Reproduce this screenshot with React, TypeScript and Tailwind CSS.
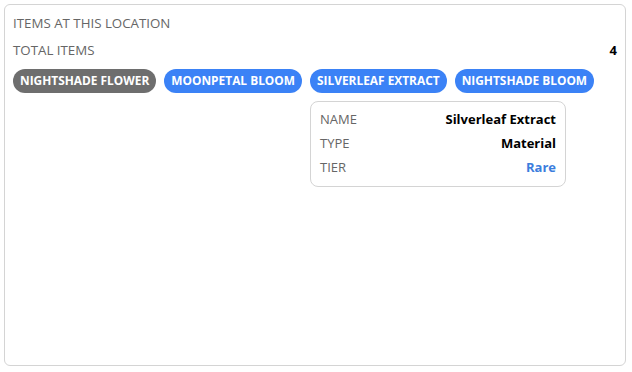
import React from "react";

const chips = [
  { label: "NIGHTSHADE FLOWER", active: false, grey: true },
  { label: "MOONPETAL BLOOM", active: false, grey: false },
  { label: "SILVERLEAF EXTRACT", active: true, grey: false },
  { label: "NIGHTSHADE BLOOM", active: false, grey: false },
];

export default function App() {
  return (
    <div className="w-[632px] h-[372px] bg-white p-1" style={{ fontFamily: '"Open Sans", "Noto Sans", sans-serif' }}>
      <div className="h-[362px] w-[622px] rounded-md border border-[#d4d4d4] px-2 pt-2">
        <div className="h-5 leading-5 text-[13.3px] text-[#666666]">ITEMS AT THIS LOCATION</div>
        <div className="mt-[7px] flex h-5 items-center justify-between text-[13.3px] leading-5">
          <span className="text-[#666666]">TOTAL ITEMS</span>
          <span className="font-bold text-[13px] text-black">4</span>
        </div>
        <div className="mt-[9px] flex gap-2">
          {chips.map((c) => (
            <div key={c.label} className="relative">
              <div
                className={
                  "flex h-6 items-center rounded-full px-[7px] text-[11.9px] font-bold text-white " +
                  (c.grey ? "bg-[#6e6e6e]" : "bg-[#3b82f6]")
                }
              >
                {c.label}
              </div>
              {c.active && (
                <div className="absolute left-0 top-full mt-2 w-[256px] rounded-lg border border-[#d4d4d4] bg-white px-[9px] py-1.5 text-[13px]">
                  <div className="flex h-6 items-center justify-between">
                    <span className="text-[#666666]">NAME</span>
                    <span className="font-bold text-black">Silverleaf Extract</span>
                  </div>
                  <div className="flex h-6 items-center justify-between">
                    <span className="text-[#666666]">TYPE</span>
                    <span className="font-bold text-black">Material</span>
                  </div>
                  <div className="flex h-6 items-center justify-between">
                    <span className="text-[#666666]">TIER</span>
                    <span className="font-bold text-[#3b7ddd]">Rare</span>
                  </div>
                </div>
              )}
            </div>
          ))}
        </div>
      </div>
    </div>
  );
}
